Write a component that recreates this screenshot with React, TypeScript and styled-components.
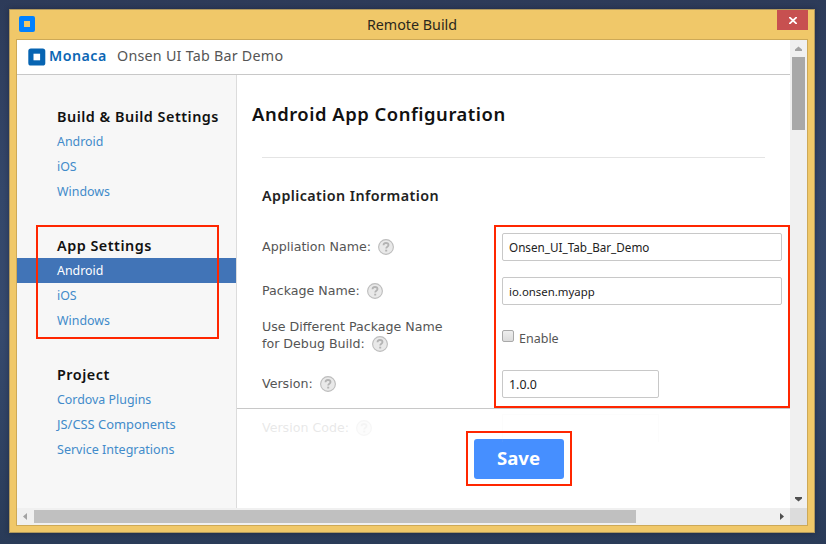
import React from "react";
import styled, { createGlobalStyle, css } from "styled-components";

const sans = `"Noto Sans", "Open Sans", sans-serif`;
const wide = `"DejaVu Sans", "Noto Sans", sans-serif`;

const GlobalStyle = createGlobalStyle`
  * { box-sizing: border-box; }
  body { margin: 0; font-family: ${sans}; color: #333; }
`;

const Desktop = styled.div`
  width: 826px;
  height: 544px;
  padding: 9px 11px 11px 9px;
  background: linear-gradient(#2d3b59 0%, #34476a 35%, #364a6e 60%, #2a3b58 100%);
`;

const Window = styled.div`
  display: flex;
  flex-direction: column;
  width: 806px;
  height: 524px;
  padding: 0 6px 6px;
  border: 1px solid #b1985c;
  background: #f0c869;
  box-shadow: 0 0 5px rgba(15, 22, 40, 0.45);
`;

const TitleBar = styled.div`
  display: grid;
  grid-template-columns: 31px 1fr 31px;
  flex: 0 0 29px;
`;

const AppIcon = styled.svg`
  width: 16px;
  height: 16px;
  margin: 6px 0 0 3px;
`;

const WindowTitle = styled.div`
  padding-top: 3px;
  text-align: center;
  font-size: 14.3px;
  line-height: 23px;
  color: #2b271c;
`;

const CloseButton = styled.button`
  display: flex;
  align-items: center;
  justify-content: center;
  width: 31px;
  height: 20px;
  padding: 1px 0 0 1px;
  border: 0;
  background: #c75050;
`;

const Viewport = styled.div`
  display: grid;
  grid-template: 468px 17px / 773px 17px;
  width: 792px;
  height: 487px;
  border: 1px solid #cda957;
`;

const Page = styled.div`
  display: flex;
  flex-direction: column;
  background: #fff;
`;

const Header = styled.header`
  display: flex;
  align-items: center;
  height: 35px;
  padding: 0 0 1px 11px;
  border-bottom: 1px solid #c8c8c8;
`;

const Logo = styled.svg`
  width: 18px;
  height: 18px;
`;

const Brand = styled.span`
  width: 58px;
  margin: -1px 0 0 3px;
  font-size: 14.2px;
  font-weight: 600;
  letter-spacing: 0.5px;
  line-height: 20px;
  color: #0b66b4;
`;

const ProjectName = styled.span`
  margin: -1px 0 0 10px;
  font-size: 14.3px;
  letter-spacing: 0.24px;
  line-height: 20px;
  color: #555;
`;

const Body = styled.div`
  display: flex;
  flex: 1;
  min-height: 0;
`;

const Sidebar = styled.nav`
  width: 220px;
  padding-top: 30px;
  border-right: 1px solid #dcdcdc;
  background: #f7f7f7;
`;

const NavSection = styled.section`
  position: relative;
  height: 129px;
`;

const NavHeading = styled.h3`
  height: 24px;
  margin: 0;
  padding-left: 40px;
  font-size: 14.4px;
  font-weight: 600;
  letter-spacing: 0.5px;
  line-height: 23px;
  color: #111;
`;

const NavLink = styled.a<{ $active?: boolean; $size?: number }>`
  display: block;
  height: 25px;
  padding-left: 40px;
  font-size: ${(p) => p.$size ?? 12.4}px;
  line-height: 25px;
  color: #428bca;
  ${(p) => p.$active && css`
    background: #4174b7;
    color: #fff;
  `}
`;

const Main = styled.main`
  display: flex;
  flex-direction: column;
  width: 553px;
`;

const Content = styled.div`
  position: relative;
  flex: 0 0 333px;
`;

const PageTitle = styled.h1`
  height: 82px;
  margin: 0;
  padding: 25px 0 0 15px;
  font-size: 18.4px;
  font-weight: 600;
  letter-spacing: 0.53px;
  line-height: 28px;
  color: #111;
`;

const Rule = styled.hr`
  width: 503px;
  height: 1px;
  margin: 0 0 0 25px;
  border: 0;
  background: #e4e4e4;
`;

const SectionTitle = styled.h2`
  height: 67px;
  margin: 0;
  padding: 26px 0 0 25px;
  font-size: 14.3px;
  font-weight: 600;
  letter-spacing: 0.42px;
  line-height: 24px;
  color: #222;
`;

const Field = styled.div<{ $height: number; $drop?: number }>`
  display: grid;
  grid-template-columns: 240px 1fr;
  align-items: center;
  height: ${(p) => p.$height}px;
  padding: ${(p) => p.$drop ?? 0}px 0 0 25px;
`;

const Label = styled.div`
  font-family: ${wide};
  font-size: 12.64px;
  color: #555;
`;

const LabelLine = styled.div`
  display: flex;
  align-items: flex-start;
  gap: 7px;
  height: 17px;
  line-height: 15px;
  white-space: nowrap;
`;

const HelpIcon = styled.svg`
  flex: none;
  width: 16px;
  height: 16px;
`;

const TextBox = styled.input<{ $width: number; $size: number }>`
  width: ${(p) => p.$width}px;
  height: 28px;
  padding: 0 6px;
  border: 1px solid #c8c8c8;
  border-radius: 2px;
  outline: 0;
  background: #fff;
  font-family: ${sans};
  font-size: ${(p) => p.$size}px;
  color: #222;
`;

const CheckLabel = styled.label`
  display: flex;
  align-items: center;
  gap: 5px;
  padding-top: 5px;
  font-size: 12.5px;
  line-height: 18px;
  color: #555;
`;

const CheckBox = styled.span`
  width: 12px;
  height: 12px;
  margin-top: -5px;
  border: 1px solid #a9a9a9;
  border-radius: 2px;
  background: linear-gradient(#eee, #dcdcdc);
`;

const Footer = styled.footer`
  position: relative;
  flex: 1;
  border-top: 1px solid #c8c8c8;
`;

const FadedField = styled.div`
  display: grid;
  grid-template-columns: 240px 1fr;
  height: 36px;
  padding: 5px 0 0 25px;
  opacity: 0.13;
`;

const FadedLabel = styled(Label)`
  padding-top: 6px;
`;

const FadedBox = styled.div`
  width: 157px;
  height: 28px;
  border: 1px solid #d8d8d8;
  border-bottom: 0;
  opacity: 0.5;
`;

const SaveButton = styled.button`
  display: block;
  width: 90px;
  height: 40px;
  margin: -6px 0 0 237px;
  padding: 0 1px 2px 0;
  border: 0;
  border-radius: 3px;
  background: #468fff;
  font-family: ${sans};
  font-size: 18.6px;
  font-weight: 700;
  line-height: 38px;
  color: #fff;
`;

/* Annotation frame drawn over the page. */
const Highlight = styled.div<{ $x: number; $y: number; $w: number; $h: number }>`
  position: absolute;
  left: ${(p) => p.$x}px;
  top: ${(p) => p.$y}px;
  width: ${(p) => p.$w}px;
  height: ${(p) => p.$h}px;
  border: 2px solid #ff2600;
  pointer-events: none;
`;

const VTrack = styled.div`
  display: flex;
  flex-direction: column;
  align-items: center;
  background: #f0f0f0;
`;

const VThumb = styled.div`
  width: 13px;
  height: 73px;
  margin-bottom: auto;
  background: #a8a8a8;
`;

const HTrack = styled.div`
  display: flex;
  align-items: center;
  background: #f0f0f0;
`;

const HThumb = styled.div`
  width: 602px;
  height: 13px;
  margin-right: auto;
  background: #c0c0c0;
`;

const Arrow = styled.svg`
  flex: none;
  width: 17px;
  height: 17px;
`;

const Corner = styled.div`
  background: #dcdcdc;
`;

const Help = () => (
  <HelpIcon viewBox="0 0 16 16">
    <circle cx="8" cy="8" r="7.4" fill="#e9e9e9" stroke="#bdbdbd" strokeWidth="1.1" />
    <path d="M5.5 6.3C5.6 4.7 6.6 4 8 4c1.4 0 2.5.8 2.5 2 0 1.7-2.3 1.7-2.3 3.5" fill="none" stroke="#b3b3b3" strokeWidth="1.8" />
    <rect x="7.2" y="10.7" width="2" height="1.8" fill="#b3b3b3" />
  </HelpIcon>
);

const arrows = {
  up: "M5 10V9.5L8.5 6.5 12 9.5V11H5Z",
  down: "M5 6V7.5L8.5 10.5 12 7.5V6Z",
  left: "M10 5V12L6 8.5Z",
  right: "M7 5V12L11 8.5Z",
};

const ScrollArrow = ({ dir, dim }: { dir: keyof typeof arrows; dim?: boolean }) => (
  <Arrow viewBox="0 0 17 17">
    <path d={arrows[dir]} fill={dim ? "#a3a3a3" : "#505050"} />
  </Arrow>
);

export default function App() {
  return (
    <>
      <GlobalStyle />
      <Desktop>
        <Window>
          <TitleBar>
            <AppIcon viewBox="0 0 16 16">
              <path fillRule="evenodd" fill="#0080ff" d="M2 0H14Q16 0 16 2V14Q16 16 14 16H2Q0 16 0 14V2Q0 0 2 0ZM5 5V11H11V5Z" />
            </AppIcon>
            <WindowTitle>Remote Build</WindowTitle>
            <CloseButton aria-label="Close">
              <svg width="8" height="7" viewBox="0 0 8 7">
                <path d="M.2 0 7.8 7M7.8 0 .2 7" stroke="#fff" strokeWidth="1.8" />
              </svg>
            </CloseButton>
          </TitleBar>
          <Viewport>
            <Page>
              <Header>
                <Logo viewBox="0 0 18 18">
                  <rect x=".3" y=".5" width="17" height="17" rx="2.6" fill="#0764b2" />
                  <rect x="5.5" y="5.7" width="6.6" height="6.6" fill="#fff" />
                </Logo>
                <Brand>Monaca</Brand>
                <ProjectName>Onsen UI Tab Bar Demo</ProjectName>
              </Header>
              <Body>
                <Sidebar>
                  <NavSection>
                    <NavHeading>Build &amp; Build Settings</NavHeading>
                    <NavLink>Android</NavLink>
                    <NavLink>iOS</NavLink>
                    <NavLink>Windows</NavLink>
                  </NavSection>
                  <NavSection>
                    <NavHeading>App Settings</NavHeading>
                    <NavLink $active>Android</NavLink>
                    <NavLink>iOS</NavLink>
                    <NavLink>Windows</NavLink>
                    <Highlight $x={19} $y={-9} $w={183} $h={114} />
                  </NavSection>
                  <NavSection>
                    <NavHeading>Project</NavHeading>
                    <NavLink>Cordova Plugins</NavLink>
                    <NavLink $size={12.9}>JS/CSS Components</NavLink>
                    <NavLink $size={12.54}>Service Integrations</NavLink>
                  </NavSection>
                </Sidebar>
                <Main>
                  <Content>
                    <PageTitle>Android App Configuration</PageTitle>
                    <Rule />
                    <SectionTitle>Application Information</SectionTitle>
                    <Field $height={44}>
                      <Label><LabelLine>Appliation Name: <Help /></LabelLine></Label>
                      <TextBox $width={280} $size={11.7} defaultValue="Onsen_UI_Tab_Bar_Demo" />
                    </Field>
                    <Field $height={44}>
                      <Label><LabelLine>Package Name: <Help /></LabelLine></Label>
                      <TextBox $width={280} $size={11.4} defaultValue="io.onsen.myapp" />
                    </Field>
                    <Field $height={46}>
                      <Label>
                        <LabelLine>Use Different Package Name</LabelLine>
                        <LabelLine>for Debug Build: <Help /></LabelLine>
                      </Label>
                      <CheckLabel><CheckBox />Enable</CheckLabel>
                    </Field>
                    <Field $height={48} $drop={2}>
                      <Label><LabelLine>Version: <Help /></LabelLine></Label>
                      <TextBox $width={157} $size={12.4} defaultValue="1.0.0" />
                    </Field>
                    <Highlight $x={257} $y={150} $w={296} $h={183} />
                  </Content>
                  <Footer>
                    <FadedField>
                      <FadedLabel><LabelLine>Version Code: <Help /></LabelLine></FadedLabel>
                      <FadedBox />
                    </FadedField>
                    <SaveButton>Save</SaveButton>
                    <Highlight $x={229} $y={22} $w={106} $h={55} />
                  </Footer>
                </Main>
              </Body>
            </Page>
            <VTrack>
              <ScrollArrow dir="up" dim />
              <VThumb />
              <ScrollArrow dir="down" />
            </VTrack>
            <HTrack>
              <ScrollArrow dir="left" dim />
              <HThumb />
              <ScrollArrow dir="right" />
            </HTrack>
            <Corner />
          </Viewport>
        </Window>
      </Desktop>
    </>
  );
}
